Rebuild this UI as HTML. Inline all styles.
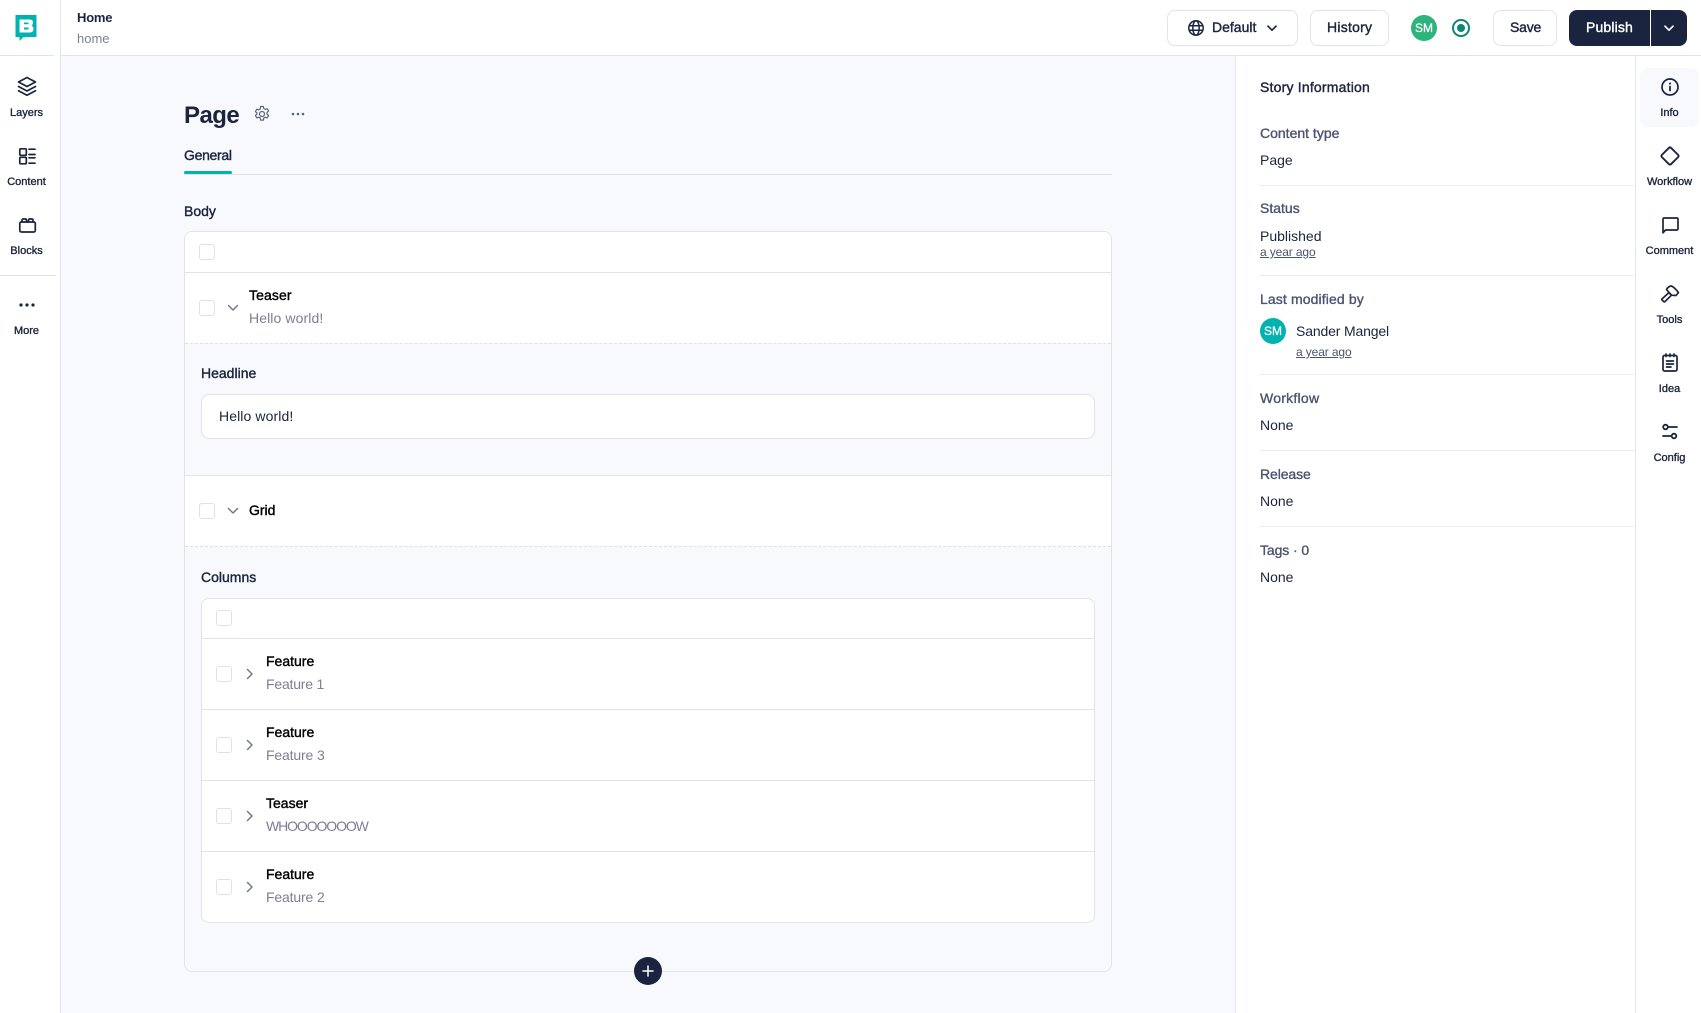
<!DOCTYPE html>
<html><head><meta charset="utf-8"><title>Home</title>
<style>
html,body{margin:0;padding:0;width:1701px;height:1013px;overflow:hidden;background:#fff}
body{position:relative;font-family:"Liberation Sans",Arial,sans-serif;color:#1b243f}
.a{position:absolute;box-sizing:border-box}
.t{position:absolute;white-space:nowrap;line-height:20px;height:20px;font-size:14px}
.m{-webkit-text-stroke:.4px currentColor}
.b{font-weight:700}
.c{transform:translateX(-50%);font-size:11px;-webkit-text-stroke:.35px currentColor}
.g{color:#7b7f98}
.l{color:#4b5370;-webkit-text-stroke:.35px currentColor}
.k{color:#000;-webkit-text-stroke:.4px #000}
.line{position:absolute;height:1px;background:#e1e3ea}
.cb{position:absolute;width:16px;height:16px;border:1px solid #dfe1e8;border-radius:3px;background:#fff;box-sizing:border-box}
.btn{position:absolute;top:10px;height:36px;border:1px solid #e1e3ea;border-radius:8px;background:#fff;box-sizing:border-box}
svg{position:absolute;overflow:visible;fill:none;stroke:#1b243f;stroke-width:1.7;stroke-linecap:round;stroke-linejoin:round}
svg.ch{stroke:#6b7190;stroke-width:1.4}
u{text-underline-offset:1px}
.y{font-size:12px;color:#4b5370;letter-spacing:-.12px}
</style></head><body>

<!-- page background -->
<div class="a" style="left:60px;top:55px;width:1176px;height:958px;background:#f8f9fd"></div>
<!-- structural lines -->
<div class="a" style="left:60px;top:0;width:1px;height:1013px;background:#e1e3ee"></div>
<div class="line" style="left:61px;top:55px;width:1640px"></div>
<div class="line" style="left:0;top:55px;width:54px"></div>
<div class="line" style="left:0;top:275px;width:56px"></div>
<div class="a" style="left:1235px;top:55px;width:1px;height:958px;background:#e6e8f2"></div>
<div class="a" style="left:1635px;top:55px;width:1px;height:958px;background:#e1e3ee"></div>

<!-- logo -->
<svg style="left:15px;top:15px;stroke:none" width="22" height="27" viewBox="0 0 22 27"><path fill="#00b3b0" d="M0.500 0H21.500V22H8.500L4.500 26V22H0.500Z"/><path fill="#fff" fill-rule="evenodd" d="M4.500 4.500H15Q18 4.500 18 7.500Q18 9.500 16.500 10.500Q18.500 11.500 18.500 14Q18.500 17.500 15 17.500H4.500ZM9 7.500V9.300H13.500V7.500ZM9 12.500V14.500H13.500V12.500Z"/></svg>

<!-- left nav -->
<svg style="left:17px;top:76px" width="20" height="20" viewBox="0 0 20 20"><path d="M10 1.500 1.500 6 10 10.500 18.500 6z"/><path d="M1.500 10.500 10 15l8.500-4.500"/><path d="M1.500 14.800 10 19.300l8.500-4.500"/></svg>
<div class="t c" style="left:26.500px;top:103px">Layers</div>
<svg style="left:19px;top:148px" width="17" height="17" viewBox="0 0 17 17"><rect x=".8" y=".8" width="6.500" height="6.500" rx=".8"/><rect x=".8" y="9.300" width="6.500" height="6.500" rx=".8"/><path d="M10 1.200h6M10 6.500h6M10 9.800h6M10 15.200h6"/></svg>
<div class="t c" style="left:26.500px;top:172px">Content</div>
<svg style="left:19px;top:218px" width="17" height="15" viewBox="0 0 17 15"><rect x=".8" y="4" width="15.500" height="10" rx="1.500"/><path d="M3 4V2.200Q3 1 4.200 1h2.100Q7.500 1 7.500 2.200V4M9.500 4V2.200Q9.500 1 10.700 1h2.100Q14 1 14 2.200V4"/></svg>
<div class="t c" style="left:26.500px;top:241px">Blocks</div>
<svg style="left:19px;top:302px;stroke:none;fill:#1b243f" width="16" height="6" viewBox="0 0 16 6"><circle cx="2" cy="3" r="1.600"/><circle cx="8" cy="3" r="1.600"/><circle cx="14" cy="3" r="1.600"/></svg>
<div class="t c" style="left:26.500px;top:321px">More</div>

<!-- top bar -->
<div class="t b" style="left:77px;top:8px;font-size:13px;letter-spacing:-.2px">Home</div>
<div class="t g" style="left:77px;top:29px;font-size:13px">home</div>

<div class="btn" style="left:1167px;width:131px"></div>
<svg style="left:1187.500px;top:20px;stroke-width:1.500" width="16" height="16" viewBox="0 0 16 16"><circle cx="8" cy="8" r="7.200"/><ellipse cx="8" cy="8" rx="3.200" ry="7.200"/><path d="M1.200 5.700h13.600M1.200 10.300h13.600"/></svg>
<div class="t m" style="left:1212px;top:17px">Default</div>
<svg style="left:1267px;top:25px" width="10" height="7" viewBox="0 0 10 7"><path d="M1 1.200 5 5.200l4-4"/></svg>
<div class="btn" style="left:1310px;width:79px"></div>
<div class="t m" style="left:1327px;top:17px;letter-spacing:.25px">History</div>
<div class="a" style="left:1411px;top:15px;width:26px;height:26px;border-radius:50%;background:#2db47d;color:#fff;font-size:12px;line-height:27px;text-align:center;-webkit-text-stroke:.25px #fff">SM</div>
<div class="a" style="left:1452px;top:19px;width:18px;height:18px;border-radius:50%;border:2px solid #0e8578"></div>
<div class="a" style="left:1457px;top:24px;width:8px;height:8px;border-radius:50%;background:#0e8578"></div>
<div class="btn" style="left:1493px;width:64px"></div>
<div class="t m" style="left:1510px;top:17px;letter-spacing:-.2px">Save</div>
<div class="a" style="left:1569px;top:10px;width:81px;height:36px;background:#1b243f;border-radius:8px 0 0 8px"></div>
<div class="a" style="left:1651px;top:10px;width:36px;height:36px;background:#1b243f;border-radius:0 8px 8px 0"></div>
<div class="t m" style="left:1586px;top:17px;color:#fff;letter-spacing:.15px">Publish</div>
<svg style="left:1664px;top:25px;stroke:#fff" width="10" height="7" viewBox="0 0 10 7"><path d="M1 1.200 5 5.200l4-4"/></svg>

<!-- page heading -->
<div class="t b" style="left:184px;top:106px;font-size:24px;line-height:20px;letter-spacing:-.55px">Page</div>
<svg style="left:253px;top:105px;stroke:#5d6480;stroke-width:1.200" width="18" height="18" viewBox="0 0 18 18"><path d="M7.600 1.500h2.800l.4 2.100 1.400.8 2-.7 1.400 2.400-1.600 1.400v1.600l1.600 1.400-1.400 2.400-2-.7-1.400.8-.4 2.100H7.600l-.4-2.100-1.400-.8-2 .7-1.400-2.400 1.600-1.400V8L2.400 6.600l1.400-2.400 2 .7 1.400-.8z"/><circle cx="9" cy="9" r="2.500"/></svg>
<svg style="left:291px;top:112px;stroke:none;fill:#5d6480" width="14" height="4" viewBox="0 0 14 4"><circle cx="2" cy="2" r="1.300"/><circle cx="7" cy="2" r="1.300"/><circle cx="12" cy="2" r="1.300"/></svg>
<div class="t m" style="left:184px;top:145px;letter-spacing:-.3px">General</div>
<div class="line" style="left:184px;top:174px;width:928px;background:#dfe1e8"></div>
<div class="a" style="left:184px;top:171px;width:48px;height:3px;background:#00b3b0;border-radius:2px"></div>
<div class="t m" style="left:184px;top:201px">Body</div>

<!-- main box -->
<div class="a" style="left:184px;top:231px;width:928px;height:741px;border:1px solid #e1e3ea;border-radius:8px"></div>
<div class="a" style="left:185px;top:232px;width:926px;height:311px;background:#fff;border-radius:7px 7px 0 0"></div>
<div class="a" style="left:185px;top:343px;width:926px;height:132px;background:#f8f9fd"></div>
<div class="a" style="left:185px;top:476px;width:926px;height:70px;background:#fff"></div>
<div class="cb" style="left:199px;top:244px"></div>
<div class="line" style="left:185px;top:272px;width:926px"></div>
<div class="cb" style="left:199px;top:300px"></div>
<svg class="ch" style="left:227px;top:304px" width="12" height="8" viewBox="0 0 12 8"><path d="M1.500 1.500 6 6l4.500-4.500"/></svg>
<div class="t k" style="left:249px;top:285px;letter-spacing:.1px">Teaser</div>
<div class="t g" style="left:249px;top:308px;letter-spacing:.1px">Hello world!</div>
<div class="a" style="left:185px;top:343px;width:926px;border-top:1px dashed #dfe1e8"></div>
<div class="t m" style="left:201px;top:363px">Headline</div>
<div class="a" style="left:201px;top:394px;width:894px;height:45px;background:#fff;border:1px solid #e1e3ea;border-radius:8px"></div>
<div class="t" style="left:219px;top:406px;letter-spacing:.1px">Hello world!</div>
<div class="line" style="left:185px;top:475px;width:926px"></div>
<div class="cb" style="left:199px;top:503px"></div>
<svg class="ch" style="left:227px;top:507px" width="12" height="8" viewBox="0 0 12 8"><path d="M1.500 1.500 6 6l4.500-4.500"/></svg>
<div class="t k" style="left:249px;top:500px">Grid</div>
<div class="a" style="left:185px;top:546px;width:926px;border-top:1px dashed #dfe1e8"></div>
<div class="t m" style="left:201px;top:567px">Columns</div>

<!-- inner box -->
<div class="a" style="left:201px;top:598px;width:894px;height:325px;background:#fff;border:1px solid #e1e3ea;border-radius:8px"></div>
<div class="cb" style="left:216px;top:610px"></div>
<div class="line" style="left:202px;top:638px;width:892px"></div>
<div class="cb" style="left:216px;top:666px"></div>
<svg class="ch" style="left:246px;top:668px" width="8" height="12" viewBox="0 0 8 12"><path d="M1.500 1.500 6 6l-4.500 4.500"/></svg>
<div class="t k" style="left:266px;top:651px">Feature</div>
<div class="t g" style="left:266px;top:674px;letter-spacing:-.2px">Feature 1</div>
<div class="line" style="left:202px;top:709px;width:892px"></div>
<div class="cb" style="left:216px;top:737px"></div>
<svg class="ch" style="left:246px;top:739px" width="8" height="12" viewBox="0 0 8 12"><path d="M1.500 1.500 6 6l-4.500 4.500"/></svg>
<div class="t k" style="left:266px;top:722px">Feature</div>
<div class="t g" style="left:266px;top:745px;letter-spacing:-.15px">Feature 3</div>
<div class="line" style="left:202px;top:780px;width:892px"></div>
<div class="cb" style="left:216px;top:808px"></div>
<svg class="ch" style="left:246px;top:810px" width="8" height="12" viewBox="0 0 8 12"><path d="M1.500 1.500 6 6l-4.500 4.500"/></svg>
<div class="t k" style="left:266px;top:793px">Teaser</div>
<div class="t g" style="left:266px;top:816px;letter-spacing:-1.1px">WHOOOOOOOW</div>
<div class="line" style="left:202px;top:851px;width:892px"></div>
<div class="cb" style="left:216px;top:879px"></div>
<svg class="ch" style="left:246px;top:881px" width="8" height="12" viewBox="0 0 8 12"><path d="M1.500 1.500 6 6l-4.500 4.500"/></svg>
<div class="t k" style="left:266px;top:864px">Feature</div>
<div class="t g" style="left:266px;top:887px;letter-spacing:-.15px">Feature 2</div>

<!-- add button -->
<div class="a" style="left:634px;top:957px;width:28px;height:28px;border-radius:50%;background:#1b243f"></div>
<svg style="left:642px;top:965px;stroke:#fff;stroke-width:1.500" width="12" height="12" viewBox="0 0 12 12"><path d="M6 1v10M1 6h10"/></svg>

<!-- right panel -->
<div class="t m" style="left:1260px;top:77px;letter-spacing:.2px">Story Information</div>
<div class="t l" style="left:1260px;top:123px">Content type</div>
<div class="t" style="left:1260px;top:150px">Page</div>
<div class="line" style="left:1260px;top:185px;width:375px;background:#eceef2"></div>
<div class="t l" style="left:1260px;top:198px">Status</div>
<div class="t" style="left:1260px;top:226px">Published</div>
<div class="t y" style="left:1260px;top:242px"><u>a year ago</u></div>
<div class="line" style="left:1260px;top:275px;width:375px;background:#eceef2"></div>
<div class="t l" style="left:1260px;top:289px;letter-spacing:.12px">Last modified by</div>
<div class="a" style="left:1260px;top:318px;width:26px;height:26px;border-radius:50%;background:#00b3b0;color:#fff;font-size:12px;line-height:27px;text-align:center;-webkit-text-stroke:.25px #fff">SM</div>
<div class="t" style="left:1296px;top:321px;letter-spacing:-.15px">Sander Mangel</div>
<div class="t y" style="left:1296px;top:342px"><u>a year ago</u></div>
<div class="line" style="left:1260px;top:374px;width:375px;background:#eceef2"></div>
<div class="t l" style="left:1260px;top:388px;letter-spacing:.25px">Workflow</div>
<div class="t" style="left:1260px;top:415px">None</div>
<div class="line" style="left:1260px;top:450px;width:375px;background:#eceef2"></div>
<div class="t l" style="left:1260px;top:464px;letter-spacing:-.1px">Release</div>
<div class="t" style="left:1260px;top:491px">None</div>
<div class="line" style="left:1260px;top:526px;width:375px;background:#eceef2"></div>
<div class="t l" style="left:1260px;top:540px;letter-spacing:-.1px">Tags · 0</div>
<div class="t" style="left:1260px;top:567px">None</div>

<!-- right nav -->
<div class="a" style="left:1640px;top:68px;width:59px;height:59px;background:#f8f9fd;border-radius:8px"></div>
<svg style="left:1661px;top:78px" width="18" height="18" viewBox="0 0 18 18"><circle cx="9" cy="9" r="8"/><path d="M9 8.500v4" stroke-width="1.800"/><path d="M9 5.500v.1" stroke-width="2"/></svg>
<div class="t c" style="left:1669.500px;top:103px">Info</div>
<svg style="left:1660px;top:146px;stroke-width:1.900" width="20" height="20" viewBox="0 0 20 20"><path d="M9 1.800 1.800 9a1.400 1.400 0 0 0 0 2L9 18.200a1.400 1.400 0 0 0 2 0L18.200 11a1.400 1.400 0 0 0 0-2L11 1.800a1.400 1.400 0 0 0-2 0z"/></svg>
<div class="t c" style="left:1669.500px;top:172px">Workflow</div>
<svg style="left:1661.500px;top:216.500px" width="17" height="17" viewBox="0 0 17 17"><path d="M1 15.800V2.200Q1 1 2.200 1h12.600Q16 1 16 2.200v9.600q0 1.200-1.200 1.200H3.500z"/></svg>
<div class="t c" style="left:1669.500px;top:241px">Comment</div>
<svg style="left:1661px;top:285px" width="18" height="18" viewBox="0 0 18 18"><path d="M1.500 13.500 8 7.500l2.500 2.700-6.500 6.300a1 1 0 0 1-1.400 0l-1.100-1.100a1 1 0 0 1 0-1.900z"/><path d="M5.500 4.500Q7.500 1 10.500 1q3 1.500 7 6.500l-2.500 3-4.500-.3L8 7.500z"/></svg>
<div class="t c" style="left:1669.500px;top:310px">Tools</div>
<svg style="left:1662px;top:353px" width="16" height="19" viewBox="0 0 16 19"><rect x="1" y="2.500" width="14" height="15.500" rx="1.500"/><path d="M4 1v2.500M8 1v2.500M12 1v2.500M4.500 8h7M4.500 11h7M4.500 14h4.500"/></svg>
<div class="t c" style="left:1669.500px;top:379px">Idea</div>
<svg style="left:1662px;top:423px;stroke-width:1.800" width="16" height="18" viewBox="0 0 16 18"><circle cx="3.500" cy="4" r="2.300"/><circle cx="12" cy="13" r="2.300"/><path d="M5.800 4h9.200M1 13h8.700"/></svg>
<div class="t c" style="left:1669.500px;top:448px">Config</div>
</body></html>
